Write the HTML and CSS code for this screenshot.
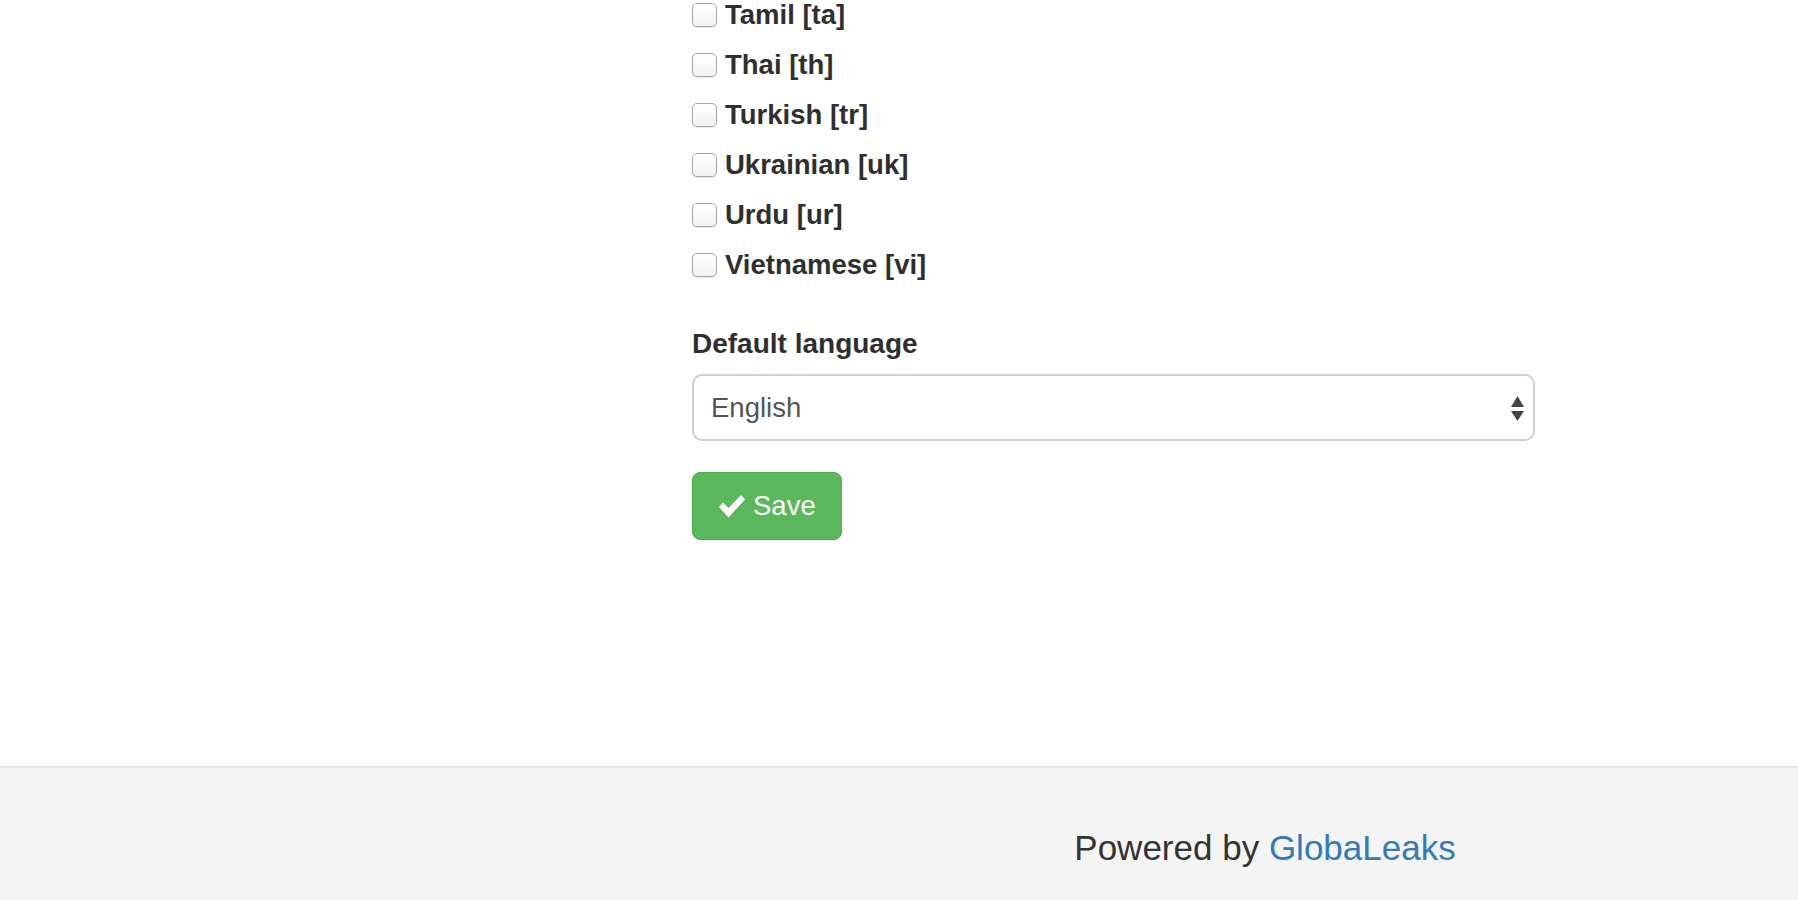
FILE: index.html
```html
<!DOCTYPE html>
<html lang="en">
<head>
<meta charset="utf-8">
<title>Languages</title>
<link rel="stylesheet" href="styles.css">
</head>
<body>
<main class="page">
  <div class="sidebar"></div>
  <div class="content">
    <div class="lang-list">
      <label class="lang-row"><input type="checkbox" class="cb"><span>Tamil [ta]</span></label>
      <label class="lang-row"><input type="checkbox" class="cb"><span>Thai [th]</span></label>
      <label class="lang-row"><input type="checkbox" class="cb"><span>Turkish [tr]</span></label>
      <label class="lang-row"><input type="checkbox" class="cb"><span>Ukrainian [uk]</span></label>
      <label class="lang-row"><input type="checkbox" class="cb"><span>Urdu [ur]</span></label>
      <label class="lang-row"><input type="checkbox" class="cb"><span>Vietnamese [vi]</span></label>
    </div>
    <div class="form-group">
      <label class="field-label">Default language</label>
      <div class="select">
        <span class="select-value">English</span>
        <svg class="select-arrows" width="13" height="26" viewBox="0 0 13 26"><polygon points="6.5,0 13,11 0,11" fill="#444"/><polygon points="0,15 13,15 6.5,25" fill="#444"/></svg>
      </div>
    </div>
    <button class="btn-save" type="button">
      <svg class="check" width="26" height="23" viewBox="0 0 26 23"><polygon points="0,12 4,7.5 9.5,13 22,0 26,4.5 9.5,22.5" fill="#fff"/></svg>
      <span>Save</span>
    </button>
  </div>
</main>
<footer class="footer">
  <p class="footer-text">Powered by <a href="#">GlobaLeaks</a></p>
</footer>
</body>
</html>
```
FILE: styles.css
```css
html, body {
  margin: 0;
  padding: 0;
}
body {
  height: 900px;
  overflow: hidden;
  display: flex;
  flex-direction: column;
  font-family: "Liberation Sans", Arial, sans-serif;
  color: #333;
  background: #fff;
}
.page {
  flex: 1;
  display: grid;
  grid-template-columns: 692px 843px;
}
.lang-list {
  margin-top: -10px;
  display: flex;
  flex-direction: column;
}
.lang-row {
  height: 50px;
  display: flex;
  align-items: center;
  gap: 8px;
  font-size: 27.5px;
  font-weight: bold;
  color: #2f2f2f;
}
.cb {
  appearance: none;
  -webkit-appearance: none;
  margin: 0;
  width: 25px;
  height: 24px;
  border: 1px solid #a6a6a6;
  border-radius: 5px;
  background: linear-gradient(#ffffff, #f1f1f1);
  box-shadow: 0 1px 1px rgba(0,0,0,0.1);
  flex: none;
}
.form-group {
  margin-top: 34px;
}
.field-label {
  display: block;
  font-size: 28px;
  font-weight: bold;
  line-height: 40px;
  color: #2f2f2f;
}
.select {
  margin-top: 10px;
  height: 67px;
  box-sizing: border-box;
  border: 2px solid #cfcfcf;
  border-radius: 10px;
  display: flex;
  align-items: center;
  justify-content: space-between;
  padding: 0 9px 0 17px;
  background: #fff;
}
.select-value {
  font-size: 27.5px;
  color: #555;
}
.select-arrows {
  display: block;
  margin-top: 2px;
}
.btn-save {
  margin-top: 31px;
  width: 150px;
  height: 68px;
  box-sizing: border-box;
  border: 1px solid #4cae4c;
  border-radius: 8px;
  background: #5cb85c;
  color: #fff;
  font-family: "Liberation Sans", Arial, sans-serif;
  font-size: 27.5px;
  display: flex;
  align-items: center;
  gap: 8px;
  padding: 0 0 0 26px;
}
.check {
  display: block;
  margin-top: 1px;
}
.footer {
  height: 134px;
  box-sizing: border-box;
  border-top: 2px solid #e2e2e2;
  background: #f4f4f4;
  padding-top: 60px;
}
.footer-text {
  margin: 0;
  padding-left: 732px;
  text-align: center;
  font-size: 35px;
  line-height: 40px;
  color: #333;
}
.footer-text a {
  color: #337ab7;
  text-decoration: none;
}
```
